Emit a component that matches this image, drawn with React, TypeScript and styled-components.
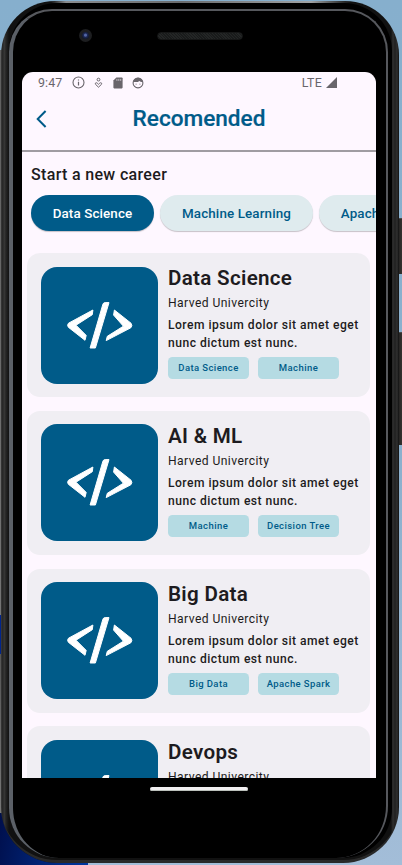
import React from 'react';
import styled, { createGlobalStyle } from 'styled-components';

const BLUE = '#005b89';

const GlobalStyle = createGlobalStyle`
  * { box-sizing: border-box; }
  html, body { margin: 0; padding: 0; overflow: hidden; }
  body { font-family: Roboto, sans-serif; color: #1d1b20; }
`;

const Desktop = styled.div`
  position: relative;
  width: 402px;
  height: 865px;
  overflow: hidden;
  background:
    linear-gradient(#5f5f5f, #747474) 0 50px / 2px 565px no-repeat,
    linear-gradient(#00248c, #00248c) 0 615px / 2px 39px no-repeat,
    linear-gradient(#555, #777) 0 654px / 2px 159px no-repeat,
    linear-gradient(100deg, #000f4c, #0038a0) 0 813px / 88px 52px no-repeat,
    linear-gradient(#86afcd, #8cb0cd 55%, #a3bdd8);
`;

const SideButton = styled.div<{ $top: number; $height: number }>`
  position: absolute;
  right: 0;
  top: ${p => p.$top}px;
  width: 5px;
  height: ${p => p.$height}px;
  background: linear-gradient(90deg, #1d1d1d, #35322f);
  border-top: 1px solid #4a4a4a;
`;

const Frame = styled.div`
  position: relative;
  width: 398px;
  height: 862px;
  margin: 1px 0 0 1px;
  padding: 2px 7px 5px 8px;
  border-radius: 54px 54px 56px 56px;
  background:
    linear-gradient(90deg, transparent 50px, #8a8d90 65px, #6a6c6e 180px, #a0a3a5 310px, transparent 350px) 0 0 / 100% 2px no-repeat,
    linear-gradient(90deg, #3a3a3a 0, #222 2px, #3b3b3a 3px, #252525 5px, #111 8px, #111 390px, #303030 392px, #202020 394px, #303030 396px, #111 398px);
  box-shadow: inset 0 -4px 0 -1px #292929;
`;

const Bezel = styled.div`
  display: flex;
  flex-direction: column;
  width: 383px;
  height: 855px;
  border-radius: 48px 48px 50px 50px;
  background: #000;
  padding: 6px 4px 0 0;
`;

const Glass = styled.div`
  display: flex;
  flex-direction: column;
  flex: 1;
  border-radius: 43px 43px 52px 50px;
  border: 0 solid #56585d;
  border-width: 2px 2px 0 4px;
  border-left-color: #5b6067;
  background: #000;
`;

const Hardware = styled.div`
  display: flex;
  align-items: center;
  height: 61px;
  padding: 0 0 12px 66px;
`;

const Camera = styled.div`
  width: 13px;
  height: 13px;
  border-radius: 50%;
  border: 3px solid #1d1e20;
  background: radial-gradient(circle at 50% 45%, #5366a5 0 1px, #1d2853 2px, #10182d 4px);
`;

const Speaker = styled.div`
  width: 86px;
  height: 8px;
  margin-left: 65px;
  border-radius: 4px;
  border: 1px solid #151616;
  background: repeating-linear-gradient(45deg, #242626 0 1px, #191b1b 1px 2px);
`;

const Screen = styled.main`
  width: 354px;
  height: 706px;
  margin-left: 9px;
  overflow: hidden;
  flex: none;
  border-radius: 11px 11px 0 0;
  background: #fef7ff;
`;

const StatusBar = styled.div`
  display: flex;
  align-items: center;
  height: 22px;
  padding: 0 39px 1px 16px;
  color: #69656b;
  font-size: 12.4px;
  svg { display: block; }
`;

const Clock = styled.span`
  width: 34px;
  letter-spacing: 0.1px;
`;

const StatusIcons = styled.div`
  display: flex;
  align-items: center;
  gap: 9px;
`;

const Network = styled.div`
  display: flex;
  align-items: center;
  gap: 4px;
  margin-left: auto;
  letter-spacing: 0.25px;
`;

const Header = styled.header`
  display: grid;
  grid-template-columns: 40px 1fr 40px;
  align-items: center;
  height: 58px;
  padding-bottom: 7px;
  border-bottom: 2px solid #a09ca2;
  svg { display: block; margin-left: 12px; }
`;

const PageTitle = styled.h1`
  margin: 0;
  text-align: center;
  font-size: 22.6px;
  line-height: 28px;
  font-weight: 500;
  color: ${BLUE};
  -webkit-text-stroke: 0.2px ${BLUE};
`;

const SectionTitle = styled.h2`
  margin: 0;
  padding: 12px 0 0 9px;
  font-size: 16px;
  line-height: 22px;
  font-weight: 500;
  letter-spacing: 0.33px;
`;

const Chips = styled.div`
  display: flex;
  gap: 6px;
  padding: 9px 0 0 9px;
`;

const Chip = styled.button<{ $active?: boolean; $width: number }>`
  flex: none;
  width: ${p => p.$width}px;
  height: 36px;
  padding: 0;
  border: 0;
  border-radius: 18px;
  font: 500 13.4px/37px Roboto, sans-serif;
  letter-spacing: 0.12px;
  color: ${p => (p.$active ? '#fff' : BLUE)};
  background: ${p => (p.$active ? BLUE : '#dfebee')};
  box-shadow: 0 1px 1px rgba(0, 0, 0, 0.22);
`;

const CourseList = styled.div`
  display: flex;
  flex-direction: column;
  gap: 13.8px;
  padding: 22px 6px 0 5px;
`;

const Card = styled.article`
  display: flex;
  height: 144px;
  padding: 13.5px 0 0 13.5px;
  border-radius: 13px;
  background: #f0eef3;
`;

const Thumb = styled.div`
  flex: none;
  width: 117px;
  height: 117px;
  border-radius: 16px;
  background: ${BLUE};
  svg { display: block; }
`;

const Info = styled.div`
  display: flex;
  flex-direction: column;
  padding-left: 10.5px;
`;

const CourseName = styled.h3`
  margin: -1.2px 0 0;
  font-size: 20.6px;
  line-height: 26px;
  font-weight: 600;
  letter-spacing: 0.3px;
`;

const School = styled.div`
  margin-top: 3px;
  font-size: 12.1px;
  line-height: 18px;
  letter-spacing: 0.43px;
`;

const Description = styled.p`
  margin: 4px 0 0;
  font-size: 12.1px;
  line-height: 18px;
  font-weight: 500;
  letter-spacing: 0.49px;
  white-space: pre-line;
`;

const Tags = styled.div`
  display: flex;
  gap: 9px;
  margin-top: 5px;
`;

const Tag = styled.span`
  width: 81px;
  height: 22px;
  padding: 3px 5px 0;
  overflow: hidden;
  border-radius: 4.5px;
  text-align: center;
  font-size: 9.5px;
  line-height: 15px;
  font-weight: 500;
  letter-spacing: 0.4px;
  color: ${BLUE};
  background: #b5dbe3;
`;

const HomeIndicator = styled.div`
  width: 98px;
  height: 4px;
  margin: 9px 0 0 137px;
  border-radius: 2px;
  background: #f1eff1;
  box-shadow: inset 0 -1px #bbc0bb;
`;

const CodeIcon = () => (
  <svg width="117" height="117" viewBox="0 0 117 117" fill="#fff" stroke="#fff" strokeWidth="1" strokeLinejoin="round">
    <path d="M51.9 43 27.5 56.2Q25.8 58 27.3 60.2L44 73.3 45.2 68.4 35 58.2 51.3 47.7Z" />
    <path d="M73.4 43 90 56.2Q91.8 58.6 89.8 60.8L65.2 73.6 66.3 69.3 82.4 59.2 72.6 48.1Z" />
    <path d="M64.2 35.6h3.8L54.4 81h-5.3L61.9 37.2q.5-1.6 2.3-1.6Z" />
  </svg>
);

const InfoIcon = () => (
  <svg width="13" height="13" viewBox="0 0 13 13" fill="none" stroke="currentColor">
    <circle cx="6.5" cy="6.5" r="5.5" strokeWidth="1.1" />
    <path d="M6.5 5.7v3.7M6.5 3.5v1.1" strokeWidth="1.2" />
  </svg>
);

const PersonIcon = () => (
  <svg width="9" height="12" viewBox="0 0 9 12" fill="none" stroke="currentColor">
    <circle cx="4.5" cy="2.6" r="1.4" />
    <path d="M4.5 10.2 1.3 7.1c-.4-1.3 1.2-1.8 2-.9l1.2 1.1 1.2-1.1c.8-.9 2.4-.4 2 .9Z" />
  </svg>
);

const CardIcon = () => (
  <svg width="11" height="12" viewBox="-1 0 11 12">
    <path d="M3.4.5H8.8q.8 0 .8.8v9.3q0 .8-.8.8H1.2q-.8 0-.8-.8V3.6Z" fill="currentColor" />
    <path d="M3.9 1.9v2M5.8 1.9v2M7.7 1.9v2" stroke="#fef7ff" strokeWidth=".6" />
  </svg>
);

const FaceIcon = () => (
  <svg width="12" height="12" viewBox="0 0 12 12">
    <circle cx="6" cy="6" r="4.9" fill="none" stroke="currentColor" strokeWidth="1.1" />
    <path d="M.9 4.8Q2.2.8 6 .7t5.1 4.1Q8.6 5.3 7.5 3.9 5.1 5.7.9 4.8Z" fill="currentColor" />
    <path d="M4.1 6.7v.9M7.9 6.7v.9" stroke="currentColor" strokeWidth=".9" />
  </svg>
);

const courses = [
  { name: 'Data Science', tags: ['Data Science', 'Machine Learning'] },
  { name: 'AI & ML', tags: ['Machine Learning', 'Decision Tree'] },
  { name: 'Big Data', tags: ['Big Data', 'Apache Spark'] },
  { name: 'Devops', tags: [] },
];

export default function App() {
  return (
    <Desktop>
      <GlobalStyle />
      <SideButton $top={218} $height={56} />
      <SideButton $top={332} $height={113} />
      <Frame>
        <Bezel>
          <Glass>
            <Hardware>
              <Camera />
              <Speaker />
            </Hardware>
            <Screen>
              <StatusBar>
                <Clock>9:47</Clock>
                <StatusIcons>
                  <InfoIcon />
                  <PersonIcon />
                  <CardIcon />
                  <FaceIcon />
                </StatusIcons>
                <Network>
                  <span>LTE</span>
                  <svg width="11" height="11" viewBox="0 0 11 11">
                    <path d="M11 0v11H0Z" fill="currentColor" />
                  </svg>
                </Network>
              </StatusBar>
              <Header>
                <svg width="14" height="18" viewBox="0 0 14 18" fill="none" stroke={BLUE} strokeWidth="2">
                  <path d="M11.6 1 3.7 9l7.9 8" />
                </svg>
                <PageTitle>Recomended</PageTitle>
              </Header>
              <SectionTitle>Start a new career</SectionTitle>
              <Chips>
                <Chip $active $width={123}>Data Science</Chip>
                <Chip $width={153}>Machine Learning</Chip>
                <Chip $width={128}>Apache Spark</Chip>
              </Chips>
              <CourseList>
                {courses.map(course => (
                  <Card key={course.name}>
                    <Thumb><CodeIcon /></Thumb>
                    <Info>
                      <CourseName>{course.name}</CourseName>
                      <School>Harved Univercity</School>
                      <Description>{'Lorem ipsum dolor sit amet eget\nnunc dictum est nunc.'}</Description>
                      <Tags>
                        {course.tags.map(tag => <Tag key={tag}>{tag}</Tag>)}
                      </Tags>
                    </Info>
                  </Card>
                ))}
              </CourseList>
            </Screen>
            <HomeIndicator />
          </Glass>
        </Bezel>
      </Frame>
    </Desktop>
  );
}
